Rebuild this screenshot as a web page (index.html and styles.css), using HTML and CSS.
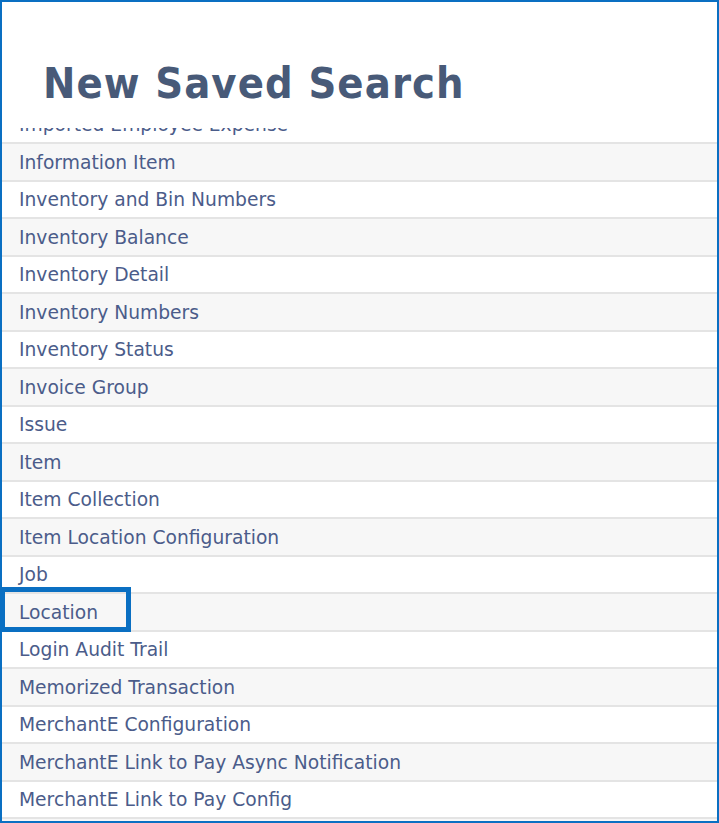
FILE: index.html
```html
<!DOCTYPE html>
<html>
<head>
<meta charset="utf-8">
<link rel="stylesheet" href="styles.css">
</head>
<body>
<div class="frame">
  <div class="title-area">
    <h1 class="title">New Saved Search</h1>
  </div>
  <div class="list">
    <div class="rows">
      <div class="row">Imported Employee Expense</div>
      <div class="row">Information Item</div>
      <div class="row">Inventory and Bin Numbers</div>
      <div class="row">Inventory Balance</div>
      <div class="row">Inventory Detail</div>
      <div class="row">Inventory Numbers</div>
      <div class="row">Inventory Status</div>
      <div class="row">Invoice Group</div>
      <div class="row">Issue</div>
      <div class="row">Item</div>
      <div class="row">Item Collection</div>
      <div class="row">Item Location Configuration</div>
      <div class="row">Job</div>
      <div class="row selected">Location<span class="highlight"></span></div>
      <div class="row">Login Audit Trail</div>
      <div class="row">Memorized Transaction</div>
      <div class="row">MerchantE Configuration</div>
      <div class="row">MerchantE Link to Pay Async Notification</div>
      <div class="row">MerchantE Link to Pay Config</div>
      <div class="row">Message</div>
    </div>
  </div>
</div>
</body>
</html>
```
FILE: styles.css
```css
html, body {
  margin: 0;
  padding: 0;
  background: #ffffff;
}

.frame {
  width: 719px;
  height: 823px;
  box-sizing: border-box;
  border: 2px solid #0a6fc2;
  display: flex;
  flex-direction: column;
  overflow: hidden;
}

.title-area {
  height: 126px;
  flex: none;
  padding-left: 41px;
  box-sizing: border-box;
}

.title {
  margin: 0;
  padding-top: 56px;
  font-family: "DejaVu Sans Condensed", "DejaVu Sans", Verdana, sans-serif;
  font-weight: bold;
  font-size: 43px;
  letter-spacing: 1.1px;
  line-height: 50px;
  color: #485a78;
}

.list {
  flex: 1;
  overflow: hidden;
}

.rows {
  margin-top: -23.5px;
}

.row {
  height: 37.5px;
  box-sizing: border-box;
  border-top: 2px solid #e4e4e4;
  padding-left: 17px;
  padding-top: 1px;
  display: flex;
  align-items: center;
  font-family: "DejaVu Sans", Verdana, sans-serif;
  font-size: 18.7px;
  color: #4b5c8a;
  background: #ffffff;
}

.row:nth-child(even) {
  background: #f7f7f7;
}

.selected {
  position: relative;
}

.highlight {
  position: absolute;
  left: -2px;
  top: -7px;
  width: 131px;
  height: 45px;
  box-sizing: border-box;
  border: 5px solid #0a6fc2;
}
```
